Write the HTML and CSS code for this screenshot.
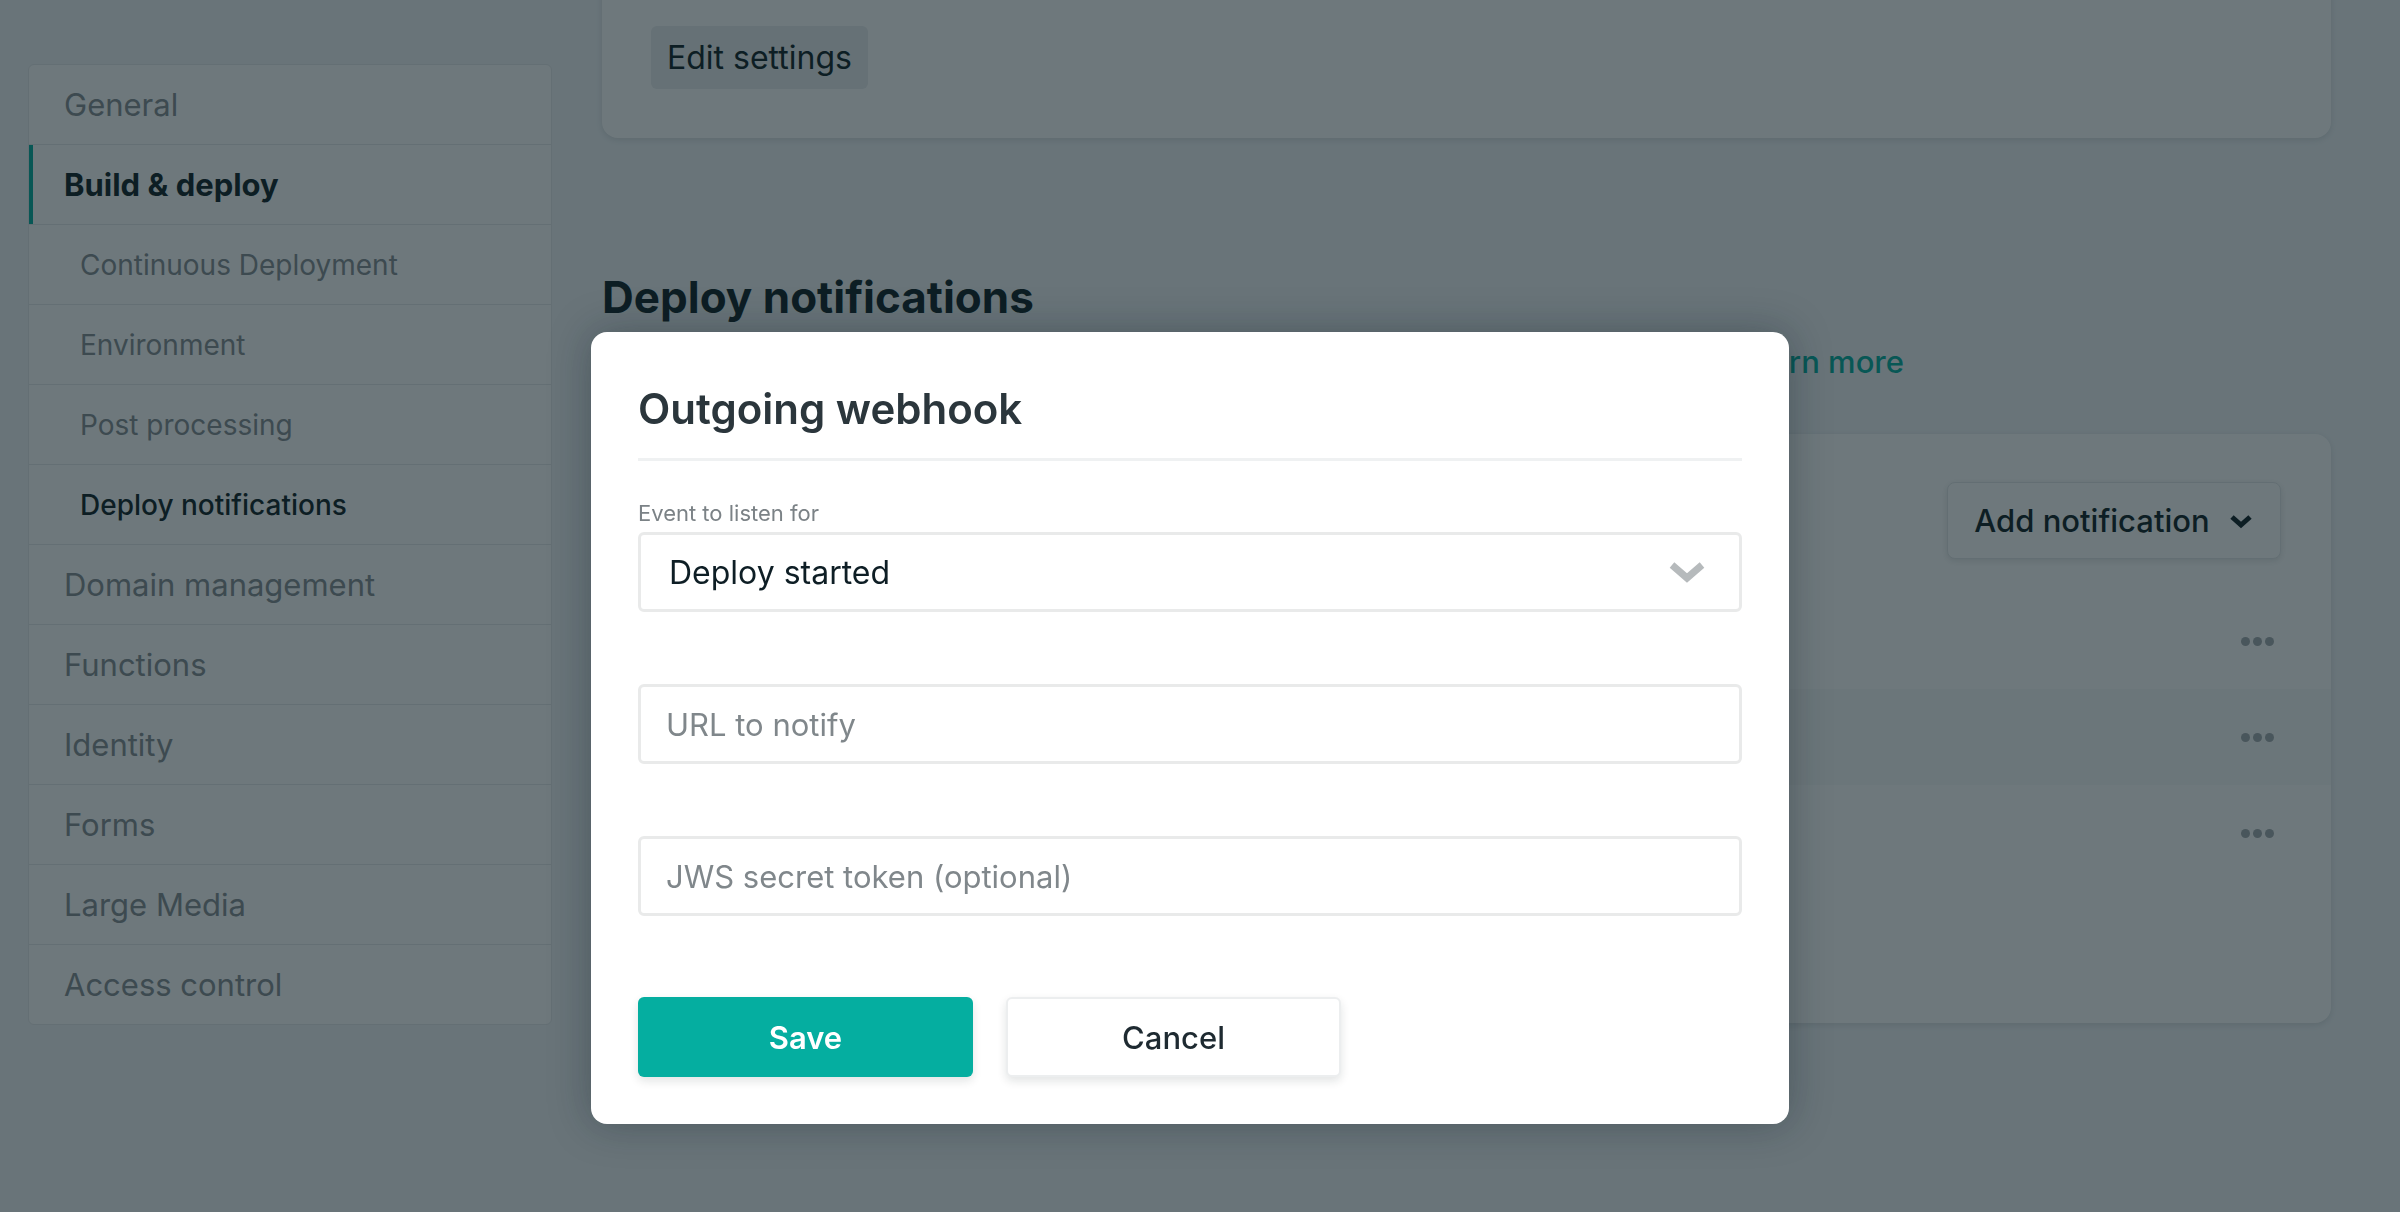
FILE: index.html
```html
<!DOCTYPE html>
<html lang="en">
<head>
    <meta charset="UTF-8">
    <meta name="viewport" content="width=device-width, initial-scale=1.0">
    <title>Build &amp; deploy settings</title>
    <link rel="stylesheet" href="styles.css">
</head>
<body>
    <div class="layout">
        <nav class="sidenav">
            <a class="navItem">General</a>
            <a class="navItem active">Build &amp; deploy</a>
            <a class="navItem sub">Continuous Deployment</a>
            <a class="navItem sub">Environment</a>
            <a class="navItem sub">Post processing</a>
            <a class="navItem sub current">Deploy notifications</a>
            <a class="navItem">Domain management</a>
            <a class="navItem">Functions</a>
            <a class="navItem">Identity</a>
            <a class="navItem">Forms</a>
            <a class="navItem">Large Media</a>
            <a class="navItem">Access control</a>
        </nav>

        <main class="content">
            <div class="card topCard">
                <button class="btnGhost">Edit settings</button>
            </div>

            <h2 class="sectionTitle">Deploy notifications</h2>
            <p class="sectionText">Set up outgoing webhooks, email, or Slack notifications for all deploy events. <a class="link">Learn more</a></p>

            <div class="card notifCard">
                <div class="notifHead">
                    <button class="btnSecondary">Add notification
                        <svg width="26" height="18" viewBox="0 0 26 18"><polyline points="4,5 13,13 22,5" fill="none" stroke="currentColor" stroke-width="5"/></svg>
                    </button>
                </div>
                <ul class="notifList">
                    <li class="notifRow"><span>Email on deploy failed</span><span class="dots"><i></i><i></i><i></i></span></li>
                    <li class="notifRow"><span>Slack on deploy succeeded</span><span class="dots"><i></i><i></i><i></i></span></li>
                    <li class="notifRow"><span>Webhook on deploy started</span><span class="dots"><i></i><i></i><i></i></span></li>
                </ul>
            </div>
        </main>
    </div>

    <div class="overlay">
        <div class="modal">
            <h3 class="modalTitle">Outgoing webhook</h3>

            <label class="fieldLabel">Event to listen for</label>
            <div class="selectBox">
                <span>Deploy started</span>
                <svg width="40" height="26" viewBox="0 0 40 26"><polyline points="5,6 20,19 35,6" fill="none" stroke="#b6babc" stroke-width="7"/></svg>
            </div>

            <input class="textInput" type="text" placeholder="URL to notify">
            <input class="textInput" type="text" placeholder="JWS secret token (optional)">

            <div class="actions">
                <button class="btnPrimary">Save</button>
                <button class="btnCancel">Cancel</button>
            </div>
        </div>
    </div>
</body>
</html>
```

FILE: styles.css
```css
body{
    margin: 0;
    background: #f2f5f8;
    font-family: Inter, "Liberation Sans", sans-serif;
    color: #0e1e25;
    overflow: hidden;
    height: 1212px;
}
button{
    font-family: inherit;
    cursor: pointer;
}
.layout{
    display: flex;
    align-items: flex-start;
    gap: 50px;
    padding-left: 28px;
}

/* left navigation */
.sidenav{
    width: 522px;
    margin-top: 64px;
    background: #fff;
    border: 1px solid #e6e8ea;
    border-radius: 6px;
    display: flex;
    flex-direction: column;
}
.navItem{
    height: 79px;
    display: flex;
    align-items: center;
    padding-left: 35px;
    font-size: 31px;
    color: #858c91;
    border-top: 1px solid #e6e8ea;
}
.navItem:first-child{
    border-top: none;
}
.navItem.active{
    color: #0e1e25;
    font-weight: 700;
    box-shadow: inset 4px 0 0 #00ad9f;
}
.navItem.sub{
    padding-left: 51px;
    font-size: 28px;
}
.navItem.current{
    color: #0e1e25;
    font-weight: 500;
}

/* main column */
.content{
    width: 1729px;
}
.card{
    background: #fff;
    border-radius: 16px;
    box-shadow: 0 2px 6px rgba(14,30,37,.12);
}
.topCard{
    margin-top: -40px;
    padding: 66px 49px 49px;
}
.btnGhost{
    height: 63px;
    padding: 0 16px;
    border: none;
    border-radius: 6px;
    background: #eaedef;
    color: #0e1e25;
    font-size: 32px;
}
.sectionTitle{
    margin: 130px 0 0;
    font-size: 44px;
    line-height: 58px;
    font-weight: 700;
}
.sectionText{
    margin: 14px 0 0;
    font-size: 31px;
    line-height: 44px;
    color: #545f66;
}
.link{
    color: #00ad9f;
    font-weight: 500;
}
.notifCard{
    margin-top: 50px;
    padding: 48px 0 142px;
}
.notifHead{
    display: flex;
    justify-content: flex-end;
    padding-right: 50px;
}
.btnSecondary{
    width: 334px;
    height: 77px;
    display: flex;
    align-items: center;
    justify-content: center;
    gap: 18px;
    border: 1px solid #e4e7e9;
    border-radius: 8px;
    background: #fff;
    box-shadow: 0 2px 6px rgba(14,30,37,.12);
    color: #0e1e25;
    font-size: 31px;
    font-weight: 500;
}
.notifList{
    list-style: none;
    margin: 34px 0 0;
    padding: 0;
}
.notifRow{
    height: 96px;
    display: flex;
    align-items: center;
    justify-content: space-between;
    padding: 0 57px 0 50px;
    font-size: 28px;
    color: #545f66;
}
.notifRow:nth-child(2){
    background: #f8f9fa;
}
.dots{
    display: flex;
    gap: 3px;
}
.dots i{
    width: 9px;
    height: 9px;
    border-radius: 50%;
    background: #a4aaae;
}

/* modal */
.overlay{
    position: fixed;
    inset: 0;
    background: rgba(14,30,37,.6);
    display: flex;
    justify-content: center;
    align-items: flex-start;
    padding: 332px 20px 0 0;
}
.modal{
    width: 1198px;
    box-sizing: border-box;
    padding: 45px 47px 47px;
    background: #fff;
    border-radius: 16px;
    box-shadow: 0 0 40px rgba(14,30,37,.35);
    display: flex;
    flex-direction: column;
}
.modalTitle{
    margin: 0;
    font-size: 42px;
    line-height: 64px;
    font-weight: 600;
    color: #2b363c;
    padding-bottom: 17px;
    border-bottom: 3px solid #eff1f2;
}
.fieldLabel{
    margin-top: 38px;
    font-size: 22px;
    line-height: 28px;
    color: #7b8286;
}
.selectBox{
    margin-top: 5px;
    height: 80px;
    box-sizing: border-box;
    border: 3px solid #e9eaea;
    border-radius: 6px;
    display: flex;
    align-items: center;
    justify-content: space-between;
    padding: 0 32px 0 28px;
    font-size: 32px;
    color: #0e1e25;
}
.textInput{
    margin-top: 72px;
    height: 80px;
    box-sizing: border-box;
    border: 3px solid #e9eaea;
    border-radius: 6px;
    padding: 0 25px;
    font-family: inherit;
    font-size: 31px;
    color: #0e1e25;
    outline: none;
}
.textInput::placeholder{
    color: #80878b;
}
.actions{
    margin-top: 81px;
    display: flex;
    gap: 33px;
}
.btnPrimary, .btnCancel{
    width: 335px;
    height: 80px;
    border-radius: 6px;
    font-size: 31px;
    box-shadow: 0 4px 10px rgba(14,30,37,.12);
}
.btnPrimary{
    border: none;
    background: #05aea0;
    color: #fff;
    font-weight: 600;
}
.btnCancel{
    border: 2px solid #eceeef;
    background: #fff;
    color: #1e2a31;
    font-weight: 500;
}
```
